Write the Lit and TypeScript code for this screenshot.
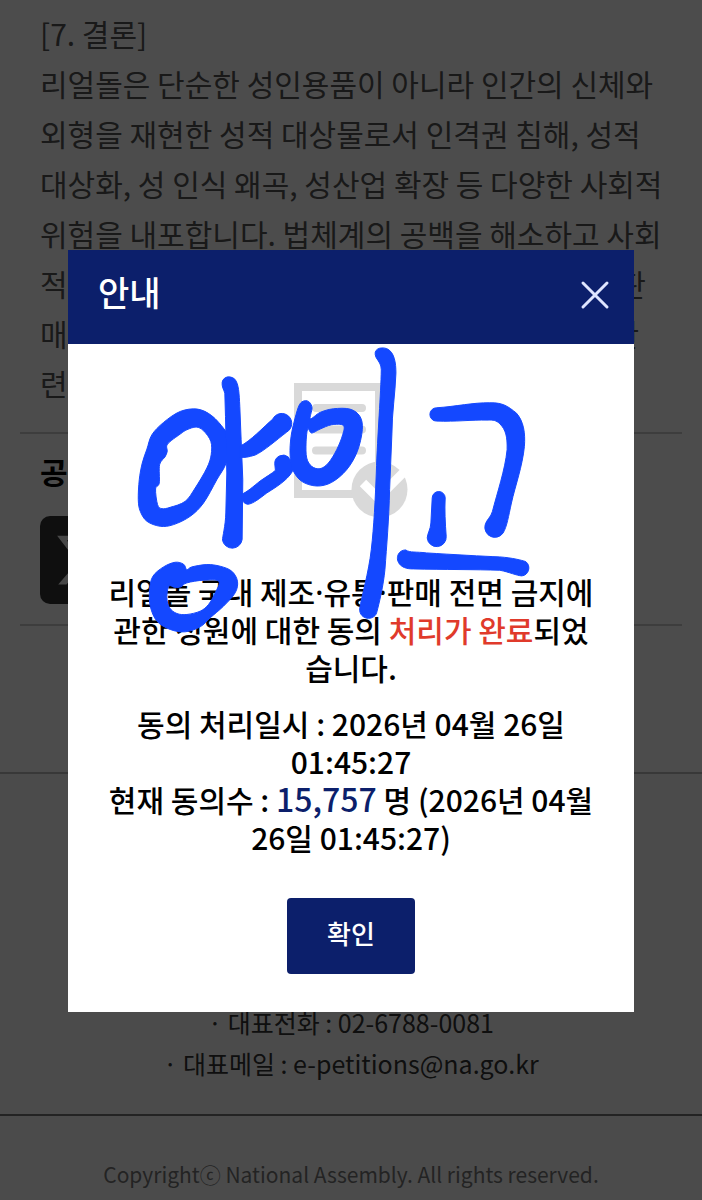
import { LitElement, html, css, svg, nothing } from "lit";
import { customElement, state } from "lit/decorators.js";

type Point = [number, number];

/** Closed Catmull-Rom curve through the given points. */
function loop(points: Point[]): string {
  const n = points.length;
  const at = (i: number) => points[(i + n) % n];
  let d = `M${points[0][0]} ${points[0][1]}`;
  for (let i = 0; i < n; i++) {
    const [a, b, c, e] = [at(i - 1), at(i), at(i + 1), at(i + 2)];
    d += `C${b[0] + (c[0] - a[0]) / 6} ${b[1] + (c[1] - a[1]) / 6} ${c[0] - (e[0] - b[0]) / 6} ${c[1] - (e[1] - b[1]) / 6} ${c[0]} ${c[1]}`;
  }
  return d + "Z";
}

const ringOne =
  loop([[66, 370], [80, 328], [95, 285], [130, 248], [180, 215], [232, 208], [275, 228], [312, 268], [330, 300], [318, 370], [290, 420], [250, 490], [210, 530], [160, 555], [120, 560], [80, 545], [60, 515], [54, 480], [57, 420]]) +
  loop([[141, 335], [142, 313], [180, 283], [200, 270], [228, 262], [250, 273], [272, 305], [273, 345], [260, 385], [225, 445], [195, 485], [150, 503], [125, 507], [112, 495], [106, 448], [117, 430], [118, 375], [134, 352]]);

const ringTwo =
  loop([[200, 690], [190, 674], [165, 668], [130, 682], [98, 710], [88, 750], [90, 800], [110, 845], [150, 870], [195, 877], [240, 862], [270, 835], [310, 800], [345, 760], [352, 725], [335, 695], [300, 680], [260, 675], [215, 682]]) +
  loop([[165, 744], [182, 742], [200, 730], [250, 722], [296, 725], [285, 760], [265, 795], [240, 815], [200, 825], [170, 822], [148, 805], [140, 775], [146, 740]]);

const ringThree =
  loop([[126, 205], [118, 187], [103, 183], [88, 195], [75, 235], [63, 290], [60, 345], [68, 390], [95, 425], [140, 439], [185, 428], [230, 390], [262, 335], [277, 270], [270, 230], [240, 208], [190, 207], [150, 218], [121, 237]]) +
  loop([[113, 268], [125, 280], [150, 268], [185, 255], [220, 257], [218, 285], [200, 330], [175, 370], [150, 387], [125, 380], [110, 355], [108, 310]]);

@customElement("document-icon")
export class DocumentIcon extends LitElement {
  static styles = css`
    :host { display: block; }
    svg { display: block; margin: 0 auto; }
  `;

  render() {
    return html`
      <svg width="114" height="136" viewBox="294 382 114 136" fill="none" stroke="#d9d9d9" aria-hidden="true">
        <rect x="298" y="387" width="81" height="107" stroke-width="8" />
        <path d="M316 408H362M316 429.500H362M316 450.500H362" stroke-width="8" stroke-linecap="round" />
        <circle cx="379.500" cy="489.500" r="28" fill="#d9d9d9" stroke="none" />
        <path d="M363 483L378 498L408 468" stroke="#fff" stroke-width="9" />
      </svg>
    `;
  }
}

@customElement("hand-note")
export class HandNote extends LitElement {
  static styles = css`
    :host { display: block; pointer-events: none; }
    svg { display: block; width: 100%; height: 100%; }
  `;

  render() {
    return html`
      <svg viewBox="68 250 566 763" preserveAspectRatio="xMidYMin meet" fill="#1448ff" stroke="#1448ff" stroke-width="3" fill-rule="evenodd" aria-hidden="true">
        ${svg`
          <g transform="translate(120 340) scale(0.3333)">
            <path d=${ringOne} />
            <path d="M306 135C303 112 328 104 344 118C356 132 357 160 359 200L363 300L368 420L366 600A30 30 0 0 1 307 602C307 590 316 560 317 520L320 400L316 230L314 160C311 150 307 145 306 135Z" />
            <path d="M458 238A30 30 0 1 1 500 277C470 300 430 335 405 346C385 352 372 355 360 352L360 319C390 305 430 262 458 238Z" />
            <path d="M464 372A25 25 0 0 1 505 352L522 385C510 415 480 435 440 460C420 475 400 492 383 494C372 492 364 485 364 464C380 458 400 440 420 424C440 410 455 402 466 392Z" />
            <path d=${ringTwo} />
          </g>
          <g transform="translate(270 340) scale(0.3333)">
            <path d=${ringThree} />
            <path d="M318 52C308 28 330 20 350 26C374 36 378 70 378 100C376 160 366 220 366 280L359 450C357 540 350 620 345 690C340 740 328 790 320 820C312 845 268 842 269 808C275 770 296 700 304 630C312 560 316 480 319 400C323 280 333 160 334 90C334 72 326 66 318 52Z" />
            <path d="M500 204C560 200 610 188 660 189C700 188 715 200 740 220C762 245 767 280 764 320C758 380 736 440 725 490C716 530 712 560 700 580A30 30 0 0 1 646 556C650 540 664 532 668 515C682 460 706 390 712 330C713 290 708 270 690 252C680 242 670 240 655 241C600 240 560 246 500 244A20 20 0 0 1 500 204Z" />
            <path d="M487 475A19 19 0 0 1 526 475C524 510 526 550 529 590A28 28 0 0 1 472 595C473 580 482 570 483 550Z" />
            <path d="M407 631C420 640 440 636 470 640C550 645 640 650 690 652C730 655 755 662 768 666C786 680 776 708 756 709C740 708 720 698 690 692C620 690 520 690 430 688C370 690 372 632 407 631Z" />
          </g>
        `}
      </svg>
    `;
  }
}

@customElement("app-root")
export class AppRoot extends LitElement {
  @state() private open = true;

  static styles = css`
    :host {
      display: block;
      position: relative;
      height: 100vh;
      overflow: hidden;
      background: #fff;
      color: #000;
      font-family: "Noto Sans CJK KR", "Noto Sans", sans-serif;
      font-size: 30px;
    }
    * { box-sizing: border-box; }
    p, h2, h3 { margin: 0; font-size: inherit; font-weight: inherit; }
    button { border: 0; padding: 0; font: inherit; color: inherit; cursor: pointer; }

    .article { padding: 8px 38px 24px 40px; line-height: 50px; color: #555; }

    .share {
      margin: 0 20px;
      padding: 18px 20px 20px;
      border-top: 2px solid #ccc;
      border-bottom: 2px solid #ccc;
    }
    .share h3 { font-weight: 700; line-height: 38px; }
    .sns {
      display: grid;
      place-items: center;
      width: 88px;
      height: 88px;
      margin-top: 26px;
      border-radius: 10px;
      background: #333;
      color: #eee;
    }

    .footer {
      margin-top: 146px;
      padding-top: 228px;
      border-top: 2px solid #bbb;
      background: #fcfcfc;
      text-align: center;
    }
    .contact { font-size: 25px; line-height: 41px; color: #333; }
    .contact a { color: inherit; text-decoration: none; }
    .legal {
      margin-top: 30px;
      padding: 40px 20px;
      border-top: 2px solid #777;
      font-size: 21px;
      line-height: 36px;
      color: #777;
    }

    .mask {
      position: absolute;
      inset: 0;
      padding: 250px 68px 0;
      background: rgba(0, 0, 0, 0.7);
    }
    .modal { position: relative; background: #fff; font-weight: 500; }
    .head {
      display: flex;
      align-items: center;
      justify-content: space-between;
      height: 94px;
      padding: 0 24px 4px 30px;
      background: #0c1f6b;
      color: #fff;
    }
    .head h2 { padding-bottom: 6px; font-size: 34px; line-height: 50px; }
    .close { display: grid; place-items: center; width: 30px; height: 30px; background: none; }
    .content { padding: 38px 36px; text-align: center; line-height: 38px; }
    .message { margin-top: 54px; }
    .result { margin-top: 18px; }
    .dot { font-family: "Noto Sans", sans-serif; line-height: 30px; }
    .done { color: #e03a2b; }
    .count { font-size: 32px; line-height: 30px; color: #0c1f6b; }
    .confirm {
      width: 128px;
      height: 76px;
      margin-top: 42px;
      padding-bottom: 6px;
      border-radius: 4px;
      background: #0c1f6b;
      color: #fff;
      font-size: 26px;
    }
    .note { position: absolute; inset: 0; }
  `;

  private close() {
    this.open = false;
  }

  private dialog() {
    return html`
      <div class="mask">
        <section class="modal" role="dialog" aria-modal="true" aria-labelledby="title">
          <header class="head">
            <h2 id="title">안내</h2>
            <button class="close" type="button" aria-label="닫기" @click=${this.close}>
              <svg width="30" height="30" viewBox="0 0 30 30" stroke="#dfe5ff" stroke-width="3" stroke-linecap="round" aria-hidden="true">
                <path d="M3 3L27 27M27 3L3 27" />
              </svg>
            </button>
          </header>
          <div class="content">
            <document-icon></document-icon>
            <p class="message">리얼돌 국내 제조<span class="dot">·</span>유통<span class="dot">·</span>판매 전면 금지에 관한 청원에 대한 동의 <span class="done">처리가 완료</span>되었습니다.</p>
            <p class="result">동의 처리일시 : 2026년 04월 26일 01:45:27</p>
            <p>현재 동의수 : <span class="count">15,757</span> 명 (2026년 04월 26일 01:45:27)</p>
            <button class="confirm" type="button" @click=${this.close}>확인</button>
          </div>
          <hand-note class="note"></hand-note>
        </section>
      </div>
    `;
  }

  render() {
    return html`
      <main class="article">
        <p>[7. 결론]</p>
        <p>리얼돌은 단순한 성인용품이 아니라 인간의 신체와 외형을 재현한 성적 대상물로서 인격권 침해, 성적 대상화, 성 인식 왜곡, 성산업 확장 등 다양한 사회적 위험을 내포합니다. 법체계의 공백을 해소하고 사회적 피해를 예방하기 위해 리얼돌 국내 제조 유통 판매를 전면 금지하는 법을 조속히 제정해 주시고 관련 대책을 마련해 주시기 바랍니다.</p>
      </main>
      <section class="share">
        <h3>공유하기</h3>
        <a class="sns" href="#x" aria-label="X">
          <svg width="60" height="60" viewBox="0 0 24 24" fill="currentColor" aria-hidden="true">
            <path d="M18.244 2.250h3.308l-7.227 8.260 8.502 11.240H16.170l-5.214-6.817L4.990 21.750H1.680l7.730-8.835L1.254 2.250H8.080l4.713 6.231zm-1.161 17.520h1.833L7.084 4.126H5.117z" />
          </svg>
        </a>
      </section>
      <footer class="footer">
        <p class="contact">· 대표전화 : 02-6788-0081</p>
        <p class="contact">· 대표메일 : <a href="mailto:e-petitions@na.go.kr">e-petitions@na.go.kr</a></p>
        <div class="legal">
          <p>Copyrightⓒ National Assembly. All rights reserved.</p>
          <p>이 홈페이지에 게시된 이메일 주소가 자동으로 수집되는 것을 거부합니다.</p>
        </div>
      </footer>
      ${this.open ? this.dialog() : nothing}
    `;
  }
}
